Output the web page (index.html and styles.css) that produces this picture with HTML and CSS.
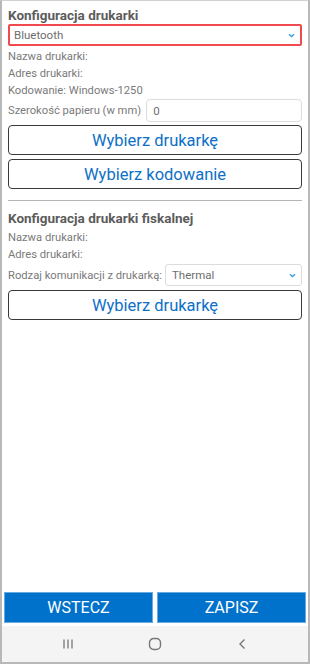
FILE: index.html
```html
<!DOCTYPE html>
<html lang="pl">
<head>
<meta charset="utf-8">
<title>Konfiguracja drukarki</title>
<link rel="stylesheet" href="styles.css">
</head>
<body>
<div class="screen">
  <main class="content">
    <h2 class="title">Konfiguracja drukarki</h2>
    <div class="select select-active">
      <span>Bluetooth</span>
      <svg class="chev" width="7" height="5" viewBox="0 0 7 5"><path d="M1 1.2 L3.5 3.6 L6 1.2" fill="none" stroke="#3aa0e0" stroke-width="1.4"/></svg>
    </div>
    <div class="label first">Nazwa drukarki:</div>
    <div class="label">Adres drukarki:</div>
    <div class="label">Kodowanie: Windows-1250</div>
    <div class="row">
      <span class="label-inline">Szerokość papieru (w mm)</span>
      <div class="input">0</div>
    </div>
    <button class="btn">Wybierz drukarkę</button>
    <button class="btn">Wybierz kodowanie</button>
    <hr class="sep">
    <h2 class="title title2">Konfiguracja drukarki fiskalnej</h2>
    <div class="label first2">Nazwa drukarki:</div>
    <div class="label">Adres drukarki:</div>
    <div class="row row2">
      <span class="label-inline">Rodzaj komunikacji z drukarką:</span>
      <div class="select select-small">
        <span>Thermal</span>
        <svg class="chev" width="7" height="5" viewBox="0 0 7 5"><path d="M1 1.2 L3.5 3.6 L6 1.2" fill="none" stroke="#3aa0e0" stroke-width="1.4"/></svg>
      </div>
    </div>
    <button class="btn btn3">Wybierz drukarkę</button>
  </main>
  <footer class="actions">
    <button class="action">WSTECZ</button>
    <button class="action">ZAPISZ</button>
  </footer>
  <nav class="navbar">
    <svg width="12" height="12" viewBox="0 0 12 12"><path d="M2 1.5 V10.5 M6 1.5 V10.5 M10 1.5 V10.5" stroke="#777" stroke-width="1.3" fill="none"/></svg>
    <svg width="14" height="14" viewBox="0 0 14 14"><rect x="1.5" y="1.5" width="11" height="11" rx="4.2" fill="none" stroke="#777" stroke-width="1.4"/></svg>
    <svg width="10" height="12" viewBox="0 0 10 12"><path d="M7.5 1.5 L3 6 L7.5 10.5" fill="none" stroke="#777" stroke-width="1.4"/></svg>
  </nav>
</div>
</body>
</html>
```
FILE: styles.css
```css
* { box-sizing: border-box; }
html, body { margin: 0; padding: 0; background: #fff; }
body { font-family: Roboto, "Liberation Sans", Arial, sans-serif; }
.screen {
  width: 310px;
  height: 664px;
  display: flex;
  flex-direction: column;
  border: 2px solid #b8b8b8;
  border-top: 1px solid #d0d0d0;
  background: #fff;
}
.content {
  flex: 1;
  padding: 5px 6px 0 6px;
  display: flex;
  flex-direction: column;
}
.title {
  margin: 0;
  font-size: 13.5px;
  font-weight: 700;
  color: #5c5c5c;
  line-height: 18px;
}
.select {
  height: 22px;
  border-radius: 3px;
  display: flex;
  align-items: center;
  justify-content: space-between;
  padding: 0 5px 0 6px;
  font-size: 11.5px;
  color: #6e6e6e;
}
.select-active {
  border: 2px solid #f04a4f;
  border-radius: 2px;
  padding-left: 4px;
}
.select-small {
  flex: 1;
  border: 1px solid #dcdcdc;
  height: 22px;
  margin-left: 3px;
}
.chev { display: block; }
.label {
  font-size: 11.2px;
  color: #7a7a7a;
  line-height: 17px;
}
.label.first { margin-top: 2px; }
.label.first2 { margin-top: 2px; }
.row {
  display: flex;
  align-items: center;
}
.label-inline {
  font-size: 11.2px;
  color: #7a7a7a;
  white-space: nowrap;
}
.input {
  flex: 1;
  height: 23px;
  margin-left: 5px;
  border: 1px solid #dcdcdc;
  border-radius: 4px;
  font-size: 11.5px;
  color: #6e6e6e;
  display: flex;
  align-items: center;
  padding-left: 6px;
}
.btn {
  display: block;
  width: 100%;
  height: 30px;
  margin-top: 3px;
  background: #fff;
  border: 1.5px solid #3a3a3a;
  border-radius: 4px;
  color: #0d70c6;
  font-family: Roboto, "Liberation Sans", Arial, sans-serif;
  font-size: 16.5px;
  padding: 0;
}
.btn + .btn { margin-top: 4px; }
.sep {
  margin: 11px 0 8px 0;
  border: 0;
  border-top: 1px solid #b4b4b4;
  height: 0;
}
.row2 { margin-top: 1px; }
.btn3 { margin-top: 4px; }
.actions {
  display: flex;
  gap: 4px;
  padding: 0 2px;
}
.action {
  flex: 1;
  height: 31px;
  background: #0072cb;
  border: 1px solid #6aa8e0;
  color: #fff;
  font-family: Roboto, "Liberation Sans", Arial, sans-serif;
  font-size: 16px;
  padding: 0;
}
.navbar {
  margin-top: 3px;
  height: 36px;
  background: #f4f4f4;
  display: grid;
  grid-template-columns: repeat(3, 87px);
  justify-content: center;
  justify-items: center;
  align-items: center;
}
.navbar svg { display: block; }
```
